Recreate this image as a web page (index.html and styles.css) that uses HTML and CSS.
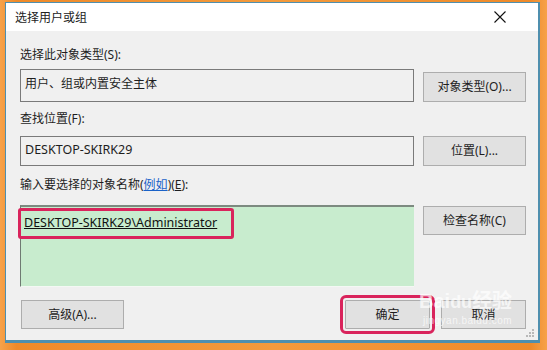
FILE: index.html
```html
<!DOCTYPE html>
<html>
<head>
    <meta charset="utf-8">
    <title>选择用户或组</title>
    <link rel="stylesheet" href="styles.css">
</head>
<body>
    <div class="window">
        <div class="titlebar">
            <span class="title">选择用户或组</span>
            <svg class="close" width="12" height="12" viewBox="0 0 12 12">
                <path d="M0.5 0.5 L11.5 11.5 M11.5 0.5 L0.5 11.5" stroke="#111" stroke-width="1.1" fill="none"/>
            </svg>
        </div>
        <div class="content">
            <div class="label label-first">选择此对象类型(S):</div>
            <div class="row row-end">
                <div class="field field-tall">用户、组或内置安全主体</div>
                <div class="button">对象类型(O)...</div>
            </div>

            <div class="label label-second">查找位置(F):</div>
            <div class="row">
                <div class="field field-short latin">DESKTOP-SKIRK29</div>
                <div class="button">位置(L)...</div>
            </div>

            <div class="label label-third">输入要选择的对象名称(<a class="link">例如</a>)(<u>E</u>):</div>
            <div class="row row-names">
                <div class="names">
                    <span class="name latin">DESKTOP-SKIRK29\Administrator</span>
                    <div class="mark"></div>
                </div>
                <div class="button button-check">检查名称(C)</div>
            </div>

            <div class="footer">
                <div class="button">高级(A)...</div>
                <div class="footer-right">
                    <div class="button button-ok">确定</div>
                    <div class="button">取消</div>
                </div>
            </div>
        </div>

        <div class="watermark">
            <div class="wm-logo">Bai<span class="wm-du">du</span>经验</div>
            <div class="wm-url">jingyan.baidu.com</div>
        </div>
        <svg class="grip" width="8" height="8" viewBox="0 0 8 8">
            <rect x="6" y="0" width="2" height="2" fill="#b8b8b8"/>
            <rect x="3" y="3" width="2" height="2" fill="#b8b8b8"/>
            <rect x="6" y="3" width="2" height="2" fill="#b8b8b8"/>
            <rect x="0" y="6" width="2" height="2" fill="#b8b8b8"/>
            <rect x="3" y="6" width="2" height="2" fill="#b8b8b8"/>
            <rect x="6" y="6" width="2" height="2" fill="#b8b8b8"/>
        </svg>
    </div>
</body>
</html>
```

FILE: styles.css
```css
html, body {
    margin: 0;
    padding: 0;
}
body {
    width: 547px;
    height: 350px;
    box-sizing: border-box;
    padding: 2px 7px 7px 5px;
    background: linear-gradient(90deg, #f7a24a, #ee8a2a 3%, #f39a3c 50%, #ee8a2a 97%, #f7a24a);
    font-family: "Noto Sans", "Noto Sans CJK SC", sans-serif;
    font-size: 12px;
    color: #1e1e1e;
}
.window {
    position: relative;
    height: 100%;
    box-sizing: border-box;
    border: 1px solid #4f8fae;
    border-right-width: 2px;
    border-bottom-width: 3px;
    background: #f0f0f0;
    overflow: hidden;
}
.titlebar {
    height: 28px;
    background: #ffffff;
    display: flex;
    align-items: center;
    justify-content: space-between;
    padding: 0 32px 0 9px;
}
.title {
    color: #222;
}
.close {
    display: block;
}
.content {
    padding: 0 12px 0 14px;
}
.latin {
    font-size: 12.5px;
}
.label {
    height: 16px;
    line-height: 16px;
}
.label-first {
    margin-top: 16px;
}
.label-second {
    margin-top: 9px;
}
.label-third {
    margin-top: 11px;
}
.link {
    color: #1a62c8;
    text-decoration: underline;
}
.row {
    display: flex;
    gap: 9px;
    margin-top: 9px;
}
.row-end {
    align-items: flex-end;
    margin-top: 6px;
}
.row-names {
    margin-top: 12px;
    align-items: flex-start;
}
.field {
    width: 394px;
    box-sizing: border-box;
    border: 1px solid #7a7a7a;
    padding: 6px 4px;
    line-height: 16px;
}
.field-tall {
    height: 33px;
}
.field-short {
    height: 30px;
    padding-top: 5px;
}
.names {
    position: relative;
    width: 394px;
    height: 82px;
    box-sizing: border-box;
    background: #c8ecce;
    border-top: 2px solid #7d8a80;
    border-left: 1px solid #6f7a72;
    border-bottom: 1px solid #f4f8f4;
    padding: 8px 3px;
    line-height: 16px;
}
.name {
    text-decoration: underline;
    color: #111;
}
.mark {
    position: absolute;
    left: -3px;
    top: 1px;
    width: 216px;
    height: 31px;
    box-sizing: border-box;
    border: 3px solid #d9245c;
    border-radius: 3px;
}
.button {
    width: 103px;
    height: 30px;
    box-sizing: border-box;
    background: #e1e1e1;
    border: 1px solid #adadad;
    display: flex;
    align-items: center;
    justify-content: center;
    line-height: 16px;
}
.button-check {
    margin-top: 1px;
    height: 29px;
}
.footer {
    display: flex;
    justify-content: space-between;
    margin-top: 13px;
    padding-left: 1px;
}
.footer .button {
    height: 29px;
}
.footer-right {
    display: flex;
    gap: 11px;
}
.footer-right .button {
    width: 85px;
}
.button-ok {
    outline: 3px solid #d9245c;
    outline-offset: 2px;
    border-radius: 1px;
}
.watermark {
    position: absolute;
    left: 413px;
    top: 287px;
    color: rgba(255, 255, 255, 0.7);
    font-family: "Liberation Sans", "Noto Sans CJK SC", sans-serif;
    pointer-events: none;
}
.wm-logo {
    font-size: 20px;
    font-weight: bold;
    line-height: 22px;
}
.wm-du {
    font-size: 18px;
}
.wm-url {
    font-size: 10px;
    line-height: 11px;
    letter-spacing: 0.5px;
    margin-top: 2px;
    margin-left: 4px;
}
.grip {
    position: absolute;
    right: 4px;
    bottom: 3px;
}
```
